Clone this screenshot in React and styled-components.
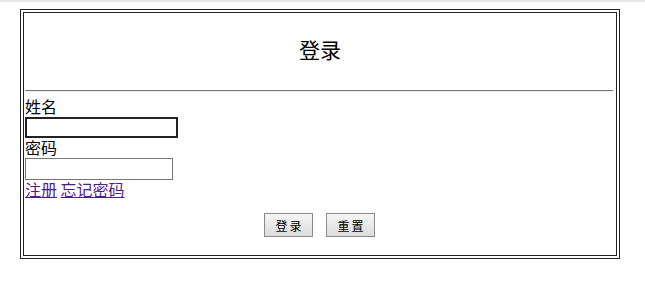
import React, { useState } from "react";
import styled, { createGlobalStyle } from "styled-components";

const GlobalStyle = createGlobalStyle`
  html, body {
    margin: 0;
    padding: 0;
    background: #fff;
  }
  body {
    border-top: 2px solid #e6e6e6;
    font-family: "Noto Sans CJK SC", "Liberation Serif", serif;
    font-size: 16px;
    color: #000;
  }
`;

const Page = styled.div`
  padding: 7px 0 0 20px;
`;

const OuterFrame = styled.div`
  width: 594px;
  height: 244px;
  border: 1px solid #222;
  padding: 2px;
`;

const InnerFrame = styled.form`
  box-sizing: border-box;
  width: 594px;
  height: 244px;
  border: 1px solid #222;
  padding: 0 1px;
  display: flex;
  flex-direction: column;
`;

const Title = styled.h2`
  margin: 0;
  height: 77px;
  display: flex;
  align-items: center;
  justify-content: center;
  font-size: 21px;
  font-weight: normal;
  padding-bottom: 5px;
  box-sizing: border-box;
`;

const Rule = styled.hr`
  margin: 0 2px 0 0;
  border: none;
  border-top: 1px solid #777;
  border-bottom: 1px solid #eee;
  height: 0;
`;

const Label = styled.div`
  margin-top: ${(p) => p.$gap || 0}px;
  line-height: 18px;
  height: 18px;
`;

const TextInput = styled.input`
  display: block;
  box-sizing: border-box;
  margin: 2px 0 0 0;
  width: ${(p) => p.$w}px;
  height: ${(p) => p.$h}px;
  border: ${(p) => (p.$dark ? "2px solid #222" : "1px solid #777")};
  outline: none;
  padding: 0 2px;
  font-size: 13px;
  background: #fff;
`;

const LinkRow = styled.div`
  margin-top: 0;
  line-height: 18px;
  a {
    color: #551a8b;
    text-decoration: underline;
  }
`;

const ButtonRow = styled.div`
  display: flex;
  justify-content: center;
  gap: 13px;
  margin-top: 15px;
  padding-right: 1px;
`;

const Button = styled.button`
  box-sizing: border-box;
  width: 49px;
  height: 24px;
  border: 1px solid #8a8a8a;
  background: linear-gradient(#f6f6f6, #dcdcdc);
  font-family: "Noto Sans CJK SC", sans-serif;
  font-size: 12px;
  color: #000;
  padding: 0;
  letter-spacing: 2px;
  text-indent: 2px;
`;

export default function App() {
  const [name, setName] = useState("");
  const [pwd, setPwd] = useState("");

  return (
    <Page>
      <GlobalStyle />
      <OuterFrame>
        <InnerFrame onSubmit={(e) => e.preventDefault()}>
          <Title>登录</Title>
          <Rule />
          <Label $gap={5}>姓名</Label>
          <TextInput $w={153} $h={21} $dark value={name} onChange={(e) => setName(e.target.value)} />
          <Label>密码</Label>
          <TextInput $w={148} $h={22} type="password" value={pwd} onChange={(e) => setPwd(e.target.value)} />
          <LinkRow>
            <a href="#">注册</a> <a href="#">忘记密码</a>
          </LinkRow>
          <ButtonRow>
            <Button type="submit">登录</Button>
            <Button type="reset" onClick={() => { setName(""); setPwd(""); }}>重置</Button>
          </ButtonRow>
        </InnerFrame>
      </OuterFrame>
    </Page>
  );
}
